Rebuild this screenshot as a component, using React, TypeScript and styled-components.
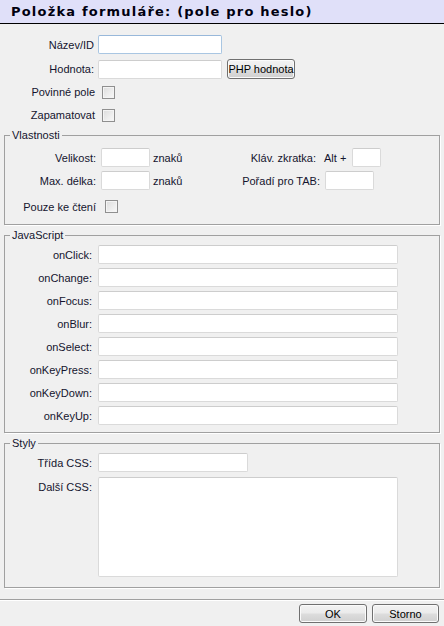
import React from "react";
import styled, { createGlobalStyle } from "styled-components";

const GlobalStyle = createGlobalStyle`
  html, body {
    margin: 0;
    padding: 0;
    background: #f0f0f0;
  }
  body {
    font-family: "Liberation Sans", Arial, sans-serif;
    font-size: 11px;
    color: #14142e;
  }
`;

const Dialog = styled.div`
  width: 444px;
  height: 626px;
  display: flex;
  flex-direction: column;
  background: #f0f0f0;
  overflow: hidden;
`;

const Header = styled.div`
  height: 23px;
  border-bottom: 1px solid #000;
  background: #e0e0f9;
  display: flex;
  align-items: center;
  padding-left: 11px;
`;

const Title = styled.h1`
  margin: 0;
  font-family: "DejaVu Sans", Verdana, sans-serif;
  font-weight: bold;
  font-size: 13px;
  letter-spacing: 1.2px;
  color: #000010;
`;

const Section = styled.div`
  display: flex;
  flex-direction: column;
  margin-top: 11px;
`;

const Row = styled.div<{ $h?: number; $gap?: number; $align?: string }>`
  display: flex;
  align-items: ${(p) => p.$align ?? "center"};
  height: ${(p) => p.$h ?? 19}px;
  margin-top: ${(p) => p.$gap ?? 0}px;
`;

const Label = styled.label<{ $w: number; $pad?: number; $top?: number }>`
  width: ${(p) => p.$w}px;
  flex: none;
  text-align: right;
  padding-right: ${(p) => p.$pad ?? 0}px;
  padding-top: ${(p) => p.$top ?? 0}px;
  box-sizing: border-box;
  white-space: nowrap;
`;

const Text = styled.span<{ $ml?: number; $w?: number }>`
  margin-left: ${(p) => p.$ml ?? 0}px;
  width: ${(p) => (p.$w ? `${p.$w}px` : "auto")};
  flex: none;
  white-space: nowrap;
`;

const Input = styled.input<{ $w: number; $ml?: number; $focus?: boolean }>`
  box-sizing: border-box;
  width: ${(p) => p.$w}px;
  height: 19px;
  margin: 0 0 0 ${(p) => p.$ml ?? 0}px;
  padding: 0 3px;
  border: 1px solid ${(p) => (p.$focus ? "#a9c6e2" : "#dadada")};
  border-top-color: ${(p) => (p.$focus ? "#98b8da" : "#cdcdcd")};
  border-radius: 2px;
  background: #fff;
  font: inherit;
  outline: none;
  flex: none;
`;

const TextArea = styled.textarea<{ $w: number; $h: number; $ml?: number }>`
  box-sizing: border-box;
  width: ${(p) => p.$w}px;
  height: ${(p) => p.$h}px;
  margin: 0 0 0 ${(p) => p.$ml ?? 0}px;
  border: 1px solid #dadada;
  border-top-color: #cdcdcd;
  border-radius: 2px;
  background: #fff;
  resize: none;
  font: inherit;
  outline: none;
  flex: none;
`;

const Check = styled.span<{ $ml?: number }>`
  box-sizing: border-box;
  display: inline-block;
  width: 13px;
  height: 13px;
  margin-left: ${(p) => p.$ml ?? 0}px;
  border: 1px solid #8f8f8f;
  background: linear-gradient(135deg, #dcdcdc 0%, #eeeeee 60%, #f8f8f8 100%);
  box-shadow: inset 0 0 0 1px #f4f4f4;
  flex: none;
`;

const Button = styled.button<{ $w: number; $ml?: number; $h?: number }>`
  box-sizing: border-box;
  width: ${(p) => p.$w}px;
  height: ${(p) => p.$h ?? 19}px;
  margin: 0 0 0 ${(p) => p.$ml ?? 0}px;
  padding: 0;
  border: 1px solid #707070;
  border-radius: 3px;
  background: linear-gradient(#f3f3f3 0%, #ebebeb 48%, #dddddd 52%, #d0d0d0 100%);
  box-shadow: inset 0 0 0 1px #fbfbfb;
  font: inherit;
  color: #000;
  flex: none;
`;

const Group = styled.fieldset<{ $mt: number; $pt: number; $pb: number }>`
  margin: ${(p) => p.$mt}px 4px 0 4px;
  padding: ${(p) => p.$pt}px 0 ${(p) => p.$pb}px 0;
  border: 1px solid #a0a0a0;
  box-shadow: 1px 1px 0 #fff;
  min-inline-size: 0;
  display: flex;
  flex-direction: column;
`;

const Legend = styled.legend`
  margin-left: 5px;
  padding: 0 2px;
  font-size: 11px;
  line-height: 14px;
`;

const Footer = styled.div`
  margin-top: 11px;
  border-top: 1px solid #a0a0a0;
  border-bottom: 1px solid #fff;
`;

const ButtonBar = styled.div`
  display: flex;
  justify-content: flex-end;
  padding: 3px 5px 0 0;
`;

const jsEvents = [
  "onClick:",
  "onChange:",
  "onFocus:",
  "onBlur:",
  "onSelect:",
  "onKeyPress:",
  "onKeyDown:",
  "onKeyUp:",
];

export default function App() {
  return (
    <Dialog>
      <GlobalStyle />
      <Header>
        <Title>Položka formuláře: (pole pro heslo)</Title>
      </Header>

      <Section>
        <Row>
          <Label $w={94}>Název/ID</Label>
          <Input $w={124} $ml={4} $focus />
        </Row>
        <Row $h={20} $gap={5}>
          <Label $w={94}>Hodnota:</Label>
          <Input $w={124} $ml={4} />
          <Button $w={68} $h={20} $ml={5}>PHP hodnota</Button>
        </Row>
        <Row $h={18} $gap={4}>
          <Label $w={95}>Povinné pole</Label>
          <Check $ml={7} />
        </Row>
        <Row $h={18} $gap={5}>
          <Label $w={95}>Zapamatovat</Label>
          <Check $ml={7} />
        </Row>
      </Section>

      <Group $mt={4} $pt={6} $pb={7}>
        <Legend>Vlastnosti</Legend>
        <Row>
          <Label $w={91}>Velikost:</Label>
          <Input $w={49} $ml={5} />
          <Text $ml={3} $w={67}>znaků</Text>
          <Label $w={100} $pad={4}>Kláv. zkratka:</Label>
          <Text $ml={4}>Alt +</Text>
          <Input $w={29} $ml={6} />
        </Row>
        <Row $gap={4}>
          <Label $w={91}>Max. délka:</Label>
          <Input $w={49} $ml={5} />
          <Text $ml={3} $w={67}>znaků</Text>
          <Label $w={100}>Pořadí pro TAB:</Label>
          <Input $w={49} $ml={5} />
        </Row>
        <Row $h={21} $gap={6}>
          <Label $w={91}>Pouze ke čtení</Label>
          <Check $ml={9} />
        </Row>
      </Group>

      <Group $mt={3} $pt={3} $pb={7}>
        <Legend>JavaScript</Legend>
        {jsEvents.map((ev, i) => (
          <Row key={ev} $gap={i === 0 ? 0 : 4}>
            <Label $w={87}>{ev}</Label>
            <Input $w={300} $ml={6} />
          </Row>
        ))}
      </Group>

      <Group $mt={3} $pt={3} $pb={10}>
        <Legend>Styly</Legend>
        <Row>
          <Label $w={87}>Třída CSS:</Label>
          <Input $w={150} $ml={6} />
        </Row>
        <Row $h={100} $gap={5} $align="flex-start">
          <Label $w={87} $top={4}>Další CSS:</Label>
          <TextArea $w={300} $h={100} $ml={6} />
        </Row>
      </Group>

      <Footer />
      <ButtonBar>
        <Button $w={68}>OK</Button>
        <Button $w={67} $ml={5}>Storno</Button>
      </ButtonBar>
    </Dialog>
  );
}
